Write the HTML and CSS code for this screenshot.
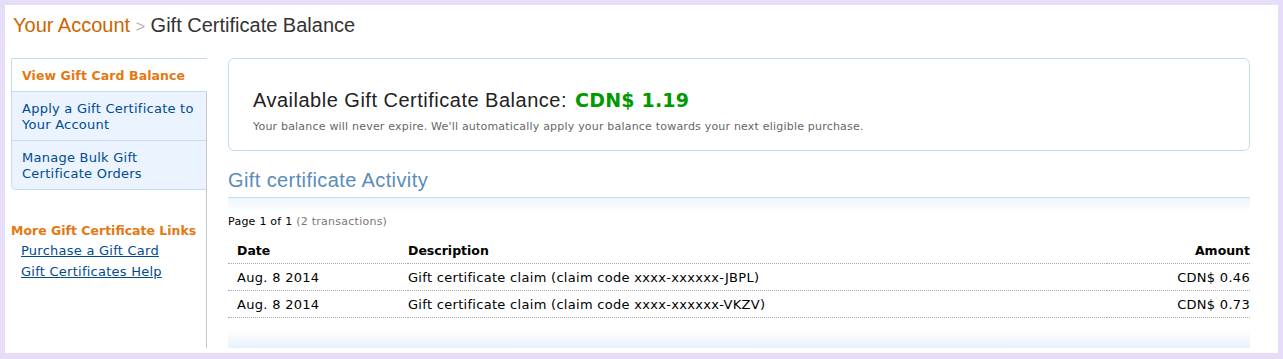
FILE: index.html
```html
<!DOCTYPE html>
<html lang="en">
<head>
  <meta charset="UTF-8">
  <title>Gift Certificate Balance</title>
  <link rel="stylesheet" href="styles.css">
</head>
<body>
  <div class="page">
    <h1 class="crumbs">
      <a class="crumb-link" href="#">Your Account</a>
      <span class="crumb-sep">&gt;</span>
      <span class="crumb-here">Gift Certificate Balance</span>
    </h1>

    <div class="columns">
      <div class="sidebar">
        <ul class="nav">
          <li class="nav-item selected">View Gift Card Balance</li>
          <li class="nav-item"><a href="#">Apply a Gift Certificate to Your Account</a></li>
          <li class="nav-item last"><a href="#">Manage Bulk Gift Certificate Orders</a></li>
        </ul>

        <div class="more-links">
          <h3>More Gift Certificate Links</h3>
          <a href="#">Purchase a Gift Card</a>
          <a href="#">Gift Certificates Help</a>
        </div>
      </div>

      <div class="main">
        <div class="balance-box">
          <div class="balance-title">Available Gift Certificate Balance: <span class="balance-amount">CDN$ 1.19</span></div>
          <div class="balance-note">Your balance will never expire. We'll automatically apply your balance towards your next eligible purchase.</div>
        </div>

        <h2 class="activity-title">Gift certificate Activity</h2>
        <div class="strip-top"></div>

        <div class="paging">Page 1 of 1 <span class="muted">(2 transactions)</span></div>

        <table class="activity">
          <thead>
            <tr>
              <th class="col-date">Date</th>
              <th class="col-desc">Description</th>
              <th class="col-amount">Amount</th>
            </tr>
          </thead>
          <tbody>
            <tr>
              <td class="col-date">Aug. 8 2014</td>
              <td class="col-desc">Gift certificate claim (claim code xxxx-xxxxxx-JBPL)</td>
              <td class="col-amount">CDN$ 0.46</td>
            </tr>
            <tr>
              <td class="col-date">Aug. 8 2014</td>
              <td class="col-desc">Gift certificate claim (claim code xxxx-xxxxxx-VKZV)</td>
              <td class="col-amount">CDN$ 0.73</td>
            </tr>
          </tbody>
        </table>

        <div class="strip-bottom"></div>
      </div>
    </div>
  </div>
</body>
</html>
```

FILE: styles.css
```css
html, body {
  height: 100%;
}

body {
  margin: 0;
  box-sizing: border-box;
  padding: 5px 5px 6px 5px;
  background-color: #e6ddf9;
  font-family: "DejaVu Sans", Verdana, sans-serif;
  color: #000;
}

.page {
  box-sizing: border-box;
  height: 100%;
  background-color: #fff;
  padding: 8px 28px 5px 6px;
  display: flex;
  flex-direction: column;
}

a {
  color: #004b91;
}

/* breadcrumb */
.crumbs {
  margin: 0 0 19px 2px;
  font-family: "Liberation Sans", Arial, sans-serif;
  font-weight: normal;
  font-size: 20px;
  line-height: 24px;
  color: #333;
}

.crumb-link {
  color: #cc6600;
  text-decoration: none;
}

.crumb-sep {
  color: #b5b5b5;
  font-size: 16px;
}

/* two columns */
.columns {
  flex: 1;
  display: flex;
}

.sidebar {
  width: 195px;
  border-right: 1px solid #c8c8c8;
}

.nav {
  list-style: none;
  margin: 0;
  padding: 0;
  font-size: 13px;
  line-height: 16px;
  letter-spacing: 0.25px;
}

.nav-item {
  background-color: #eaf3fe;
  border-left: 1px solid #c5ddf2;
  border-bottom: 1px solid #c5ddf2;
  padding: 9px 4px 7px 10px;
}

.nav-item a {
  text-decoration: none;
}

.nav-item.selected {
  background-color: #fff;
  border-top: 1px solid #c5ddf2;
  margin-right: -1px;
  color: #e47911;
  font-size: 12.5px;
  letter-spacing: 0.1px;
  font-weight: bold;
}

.nav-item.last {
  border-bottom-left-radius: 5px;
}

.more-links {
  margin-top: 33px;
}

.more-links h3 {
  margin: 0 0 1px 0;
  font-size: 12.5px;
  line-height: 16px;
  color: #e47911;
}

.more-links a {
  display: block;
  margin-left: 10px;
  font-size: 13px;
  letter-spacing: 0.25px;
  line-height: 21px;
}

/* main column */
.main {
  flex: 1;
  margin-left: 21px;
  display: flex;
  flex-direction: column;
}

.balance-box {
  border: 1px solid #c5ddf2;
  border-radius: 6px;
  padding: 28px 24px 15px 24px;
}

.balance-title {
  font-family: "Liberation Sans", Arial, sans-serif;
  font-size: 20px;
  line-height: 26px;
  letter-spacing: 0.5px;
  color: #222;
}

.balance-amount {
  margin-left: 2px;
  font-family: "DejaVu Sans", Verdana, sans-serif;
  font-weight: bold;
  font-size: 19px;
  letter-spacing: 0.2px;
  color: #009900;
}

.balance-note {
  margin-top: 6px;
  font-size: 11px;
  letter-spacing: 0.2px;
  line-height: 16px;
  color: #666;
}

.activity-title {
  margin: 17px 0 0 0;
  font-family: "Liberation Sans", Arial, sans-serif;
  font-weight: normal;
  font-size: 20px;
  letter-spacing: 0.4px;
  line-height: 24px;
  color: #5a8cbb;
}

.strip-top {
  margin-top: 5px;
  height: 14px;
  border-top: 1px solid #c9dcec;
  background: linear-gradient(#edf5fd, #fff);
}

.paging {
  margin-top: 3px;
  font-size: 11px;
  letter-spacing: 0.25px;
  line-height: 14px;
}

.muted {
  color: #777;
}

.activity {
  width: 100%;
  border-collapse: collapse;
  margin-top: 8px;
  font-size: 13px;
}

.activity th,
.activity td {
  height: 26px;
  padding: 0;
  border-bottom: 1px dotted #aaa;
  text-align: left;
}

.activity td {
  letter-spacing: 0.3px;
}

.activity th {
  font-size: 12.5px;
  font-weight: bold;
}

.activity .col-date {
  width: 171px;
  padding-left: 9px;
}

.activity .col-amount {
  text-align: right;
}

.strip-bottom {
  margin-top: auto;
  height: 18px;
  background: linear-gradient(#fff, #e8f2fc);
}
```
